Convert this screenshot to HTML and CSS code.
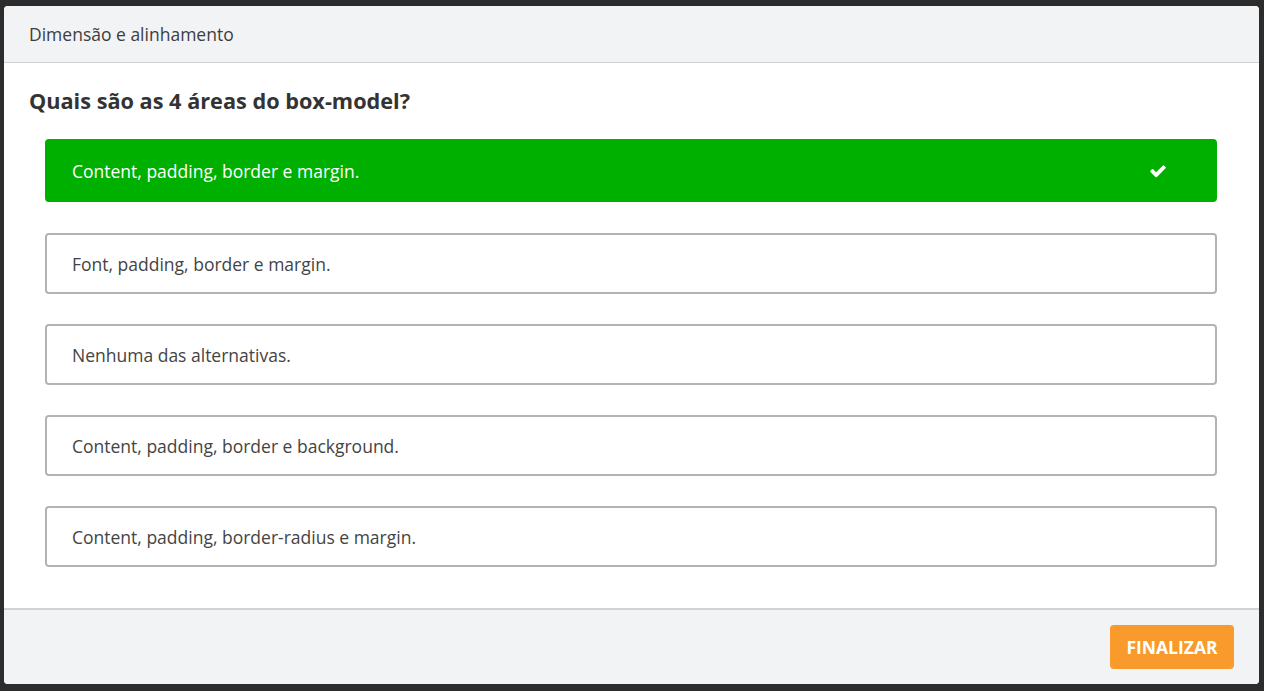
FILE: index.html
```html
<!DOCTYPE html>
<html lang="pt">
<head>
<meta charset="utf-8">
<title>Dimensão e alinhamento</title>
<link rel="stylesheet" href="styles.css">
</head>
<body>
<div class="modal">
  <div class="modal-header">Dimensão e alinhamento</div>
  <div class="modal-body">
    <h2 class="question">Quais são as 4 áreas do box-model?</h2>
    <div class="options">
      <div class="option correct">
        <span>Content, padding, border e margin.</span>
        <svg class="check" viewBox="0 0 1792 1792" width="18" height="18"><path fill="#fff" d="M1671 566q0 40-28 68l-724 724-136 136q-28 28-68 28t-68-28l-136-136-362-362q-28-28-28-68t28-68l136-136q28-28 68-28t68 28l294 295 656-657q28-28 68-28t68 28l136 136q28 28 28 68z"/></svg>
      </div>
      <div class="option"><span>Font, padding, border e margin.</span></div>
      <div class="option"><span>Nenhuma das alternativas.</span></div>
      <div class="option"><span>Content, padding, border e background.</span></div>
      <div class="option"><span>Content, padding, border-radius e margin.</span></div>
    </div>
  </div>
  <div class="modal-footer">
    <button class="btn-finish">FINALIZAR</button>
  </div>
</div>
</body>
</html>
```
FILE: styles.css
```css
html, body {
  margin: 0;
  height: 100%;
}
body {
  background: #2c2c2c;
  padding: 6px 5px 7px 4px;
  box-sizing: border-box;
  font-family: "Open Sans", "Liberation Sans", sans-serif;
  color: #3b3b3b;
}
.modal {
  background: #fff;
  border-radius: 4px;
  overflow: hidden;
  height: 678px;
  display: flex;
  flex-direction: column;
}
.modal-header {
  background: #f2f3f5;
  border-bottom: 1px solid #cfd3d7;
  height: 57px;
  box-sizing: border-box;
  padding: 0 25px;
  display: flex;
  align-items: center;
  font-size: 17.5px;
  color: #3d3d3d;
}
.modal-body {
  flex: 1;
  padding: 24px 25px 0 25px;
}
.question {
  margin: 0 0 24px 0;
  font-size: 21.7px;
  line-height: 28px;
  font-weight: 700;
  color: #333;
}
.options {
  padding: 0 17px 0 16px;
  display: flex;
  flex-direction: column;
  gap: 30px;
}
.option {
  height: 61px;
  box-sizing: border-box;
  border: 2px solid #b0b4b9;
  border-radius: 4px;
  padding: 0 25px;
  display: flex;
  align-items: center;
  justify-content: space-between;
  font-size: 17.5px;
  color: #444;
}
.option.correct {
  background: #00b000;
  border-color: #00b000;
  color: #fff;
  height: 63px;
  margin-bottom: 1px;
}
.check {
  margin-right: 23px;
}
.modal-footer {
  background: #f2f3f5;
  border-top: 2px solid #cfd3d7;
  height: 76px;
  box-sizing: border-box;
  display: flex;
  justify-content: flex-end;
  align-items: flex-start;
  padding: 15px 25px 0 0;
}
.btn-finish {
  background: #f99a2c;
  color: #fff;
  border: none;
  border-radius: 4px;
  width: 124px;
  height: 44px;
  font-family: "Open Sans", "Liberation Sans", sans-serif;
  font-weight: 700;
  font-size: 17.5px;
  cursor: pointer;
}
```
